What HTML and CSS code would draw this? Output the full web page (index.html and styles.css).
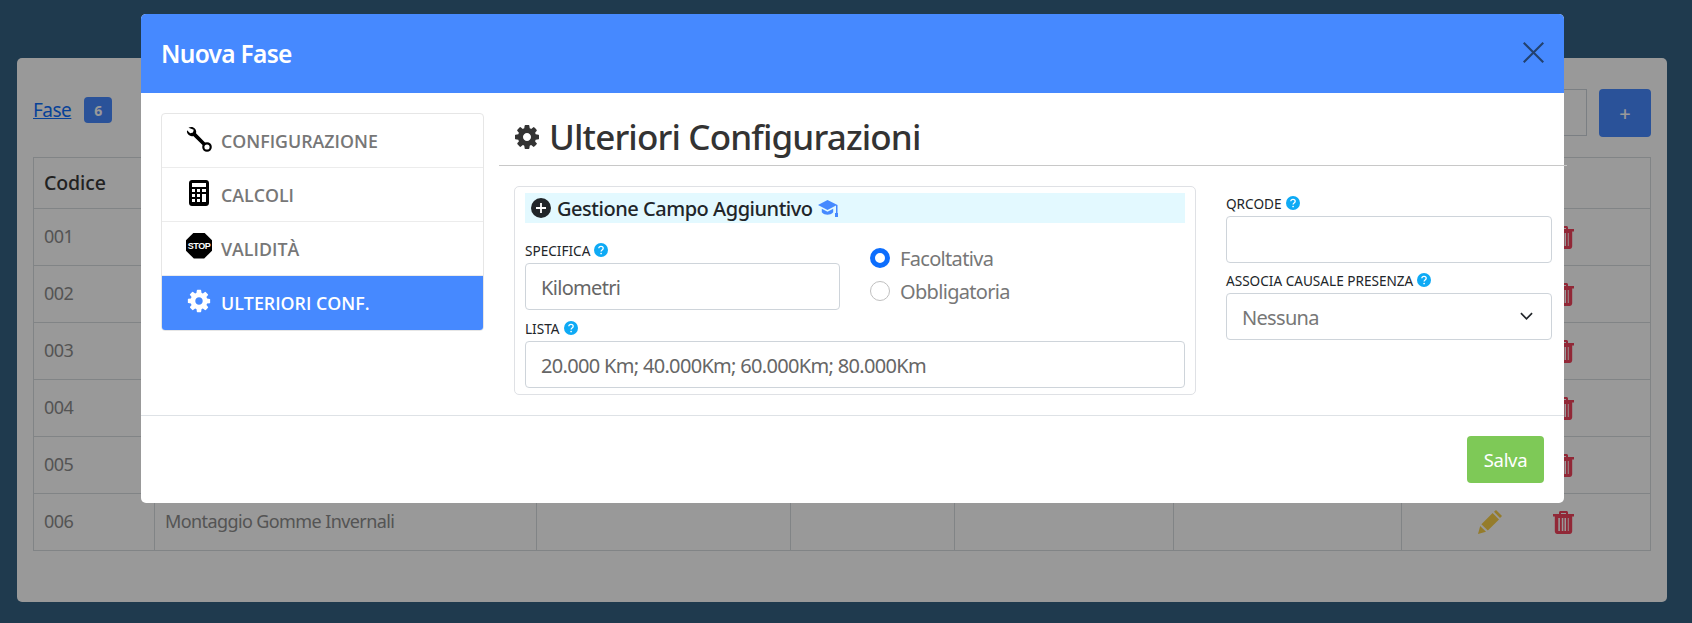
FILE: index.html
```html
<!DOCTYPE html>
<html lang="it">
<head>
<meta charset="utf-8">
<title>Nuova Fase</title>
<link rel="stylesheet" href="styles.css">
</head>
<body>
<svg class="defs" width="0" height="0" aria-hidden="true">
  <symbol id="cog" viewBox="0 0 1792 1792"><path d="M1152 896q0-106-75-181t-181-75-181 75-75 181 75 181 181 75 181-75 75-181zm512-109v222q0 12-8 23t-20 13l-185 28q-19 54-39 91 35 50 107 138 10 12 10 25t-9 23q-27 37-99 108t-94 71q-12 0-26-9l-138-108q-44 23-91 38-16 136-29 186-7 28-36 28h-222q-14 0-24.5-8.5t-11.5-21.5l-28-184q-49-16-90-37l-141 107q-10 9-25 9-14 0-25-11-126-114-165-168-7-10-7-23 0-12 8-23 15-21 51-66.5t54-70.5q-27-50-41-99l-183-27q-13-2-21-12.5t-8-23.5v-222q0-12 8-23t19-13l186-28q14-46 39-92-40-57-107-138-10-12-10-24 0-10 9-23 26-36 98.5-107.5t94.5-71.5q13 0 26 10l138 107q44-23 91-38 16-136 29-186 7-28 36-28h222q14 0 24.5 8.5t11.5 21.5l28 184q49 16 90 37l142-107q9-9 24-9 13 0 25 10 129 119 165 170 7 8 7 22 0 12-8 23-15 21-51 66.5t-54 70.5q26 50 41 98l183 28q13 2 21 12.5t8 23.5z"/></symbol>
  <symbol id="pencil" viewBox="0 0 24 24"><path d="M0 24l2.2-8 5.8 5.8z"/><path d="M3.4 14.2L14.6 3l6.4 6.4L9.8 20.6z"/><path d="M16 1.8L18 0l6 6-2 2z"/></symbol>
  <symbol id="trash" viewBox="0 0 21 23"><path fill-rule="evenodd" d="M0 3h6V1.500C6 .7 6.700 0 7.500 0h6c.8 0 1.500.7 1.500 1.500V3h6v2.600h-1.800v14.600c0 1.500-1.100 2.800-2.500 2.800H4.300c-1.400 0-2.500-1.300-2.500-2.800V5.600H0zM8 1.900v1.100h5V1.900zM5.300 7v13h1.600V7zM8.800 7v13h1.500V7zM11.500 7v13H13V7zM14.800 7v13h.9V7z"/></symbol>
  <symbol id="help" viewBox="0 0 14 14"><circle cx="7" cy="7" r="7" fill="#0eaaf5"/><path d="M4.800 5.300C4.900 4 5.800 3.300 7 3.300c1.300 0 2.200.8 2.200 1.900 0 1.800-2.100 1.700-2.100 3.300" fill="none" stroke="#fff" stroke-width="1.300"/><circle cx="7.100" cy="10.500" r=".85" fill="#fff"/></symbol>
</svg>

<main class="card">
  <div class="card-top">
    <div class="card-title">
      <a class="fase-link" href="#">Fase</a>
      <span class="count">6</span>
    </div>
    <div class="card-tools">
      <div class="search"></div>
      <button class="add" type="button">+</button>
    </div>
  </div>
  <table class="grid">
    <colgroup>
      <col class="c1"><col class="c2"><col class="c3"><col class="c4"><col class="c5"><col class="c6"><col class="c7">
    </colgroup>
    <thead>
      <tr><th>Codice</th><th></th><th></th><th></th><th></th><th></th><th></th></tr>
    </thead>
    <tbody>
      <tr><td>001</td><td></td><td></td><td></td><td></td><td></td>
        <td class="acts"><svg class="pen"><use href="#pencil"/></svg><svg class="bin"><use href="#trash"/></svg></td></tr>
      <tr><td>002</td><td></td><td></td><td></td><td></td><td></td>
        <td class="acts"><svg class="pen"><use href="#pencil"/></svg><svg class="bin"><use href="#trash"/></svg></td></tr>
      <tr><td>003</td><td></td><td></td><td></td><td></td><td></td>
        <td class="acts"><svg class="pen"><use href="#pencil"/></svg><svg class="bin"><use href="#trash"/></svg></td></tr>
      <tr><td>004</td><td></td><td></td><td></td><td></td><td></td>
        <td class="acts"><svg class="pen"><use href="#pencil"/></svg><svg class="bin"><use href="#trash"/></svg></td></tr>
      <tr><td>005</td><td></td><td></td><td></td><td></td><td></td>
        <td class="acts"><svg class="pen"><use href="#pencil"/></svg><svg class="bin"><use href="#trash"/></svg></td></tr>
      <tr><td>006</td><td>Montaggio Gomme Invernali</td><td></td><td></td><td></td><td></td>
        <td class="acts"><svg class="pen"><use href="#pencil"/></svg><svg class="bin"><use href="#trash"/></svg></td></tr>
    </tbody>
  </table>
</main>

<div class="backdrop"></div>

<section class="modal">
  <header class="modal-head">
    <h2>Nuova Fase</h2>
    <svg class="close" viewBox="0 0 20 20"><path d="M.7.7l18.600 18.600M19.300.7L.7 19.300"/></svg>
  </header>
  <div class="modal-body">
    <nav class="side">
      <a class="side-item" href="#">
        <svg class="side-ico" viewBox="0 0 26 26"><path d="M2.500 1.800C4.600 .4 7.400.8 9 2.700c1.100 1.300 1.500 3 1 4.500l9.500 9.800-2.500 2.500L7.300 10c-1.700.5-3.500.1-4.800-1.200C1.200 7.500.7 5.800 1 4.200l3.200 3 2.800-.7.700-2.800z"/><circle cx="21" cy="21" r="3.700" fill="none" stroke="#000" stroke-width="2.200"/></svg>
        <span>CONFIGURAZIONE</span>
      </a>
      <a class="side-item" href="#">
        <svg class="side-ico" viewBox="0 0 26 26"><path fill-rule="evenodd" d="M6 0h14c1.700 0 3 1.300 3 3v20c0 1.700-1.300 3-3 3H6c-1.700 0-3-1.300-3-3V3c0-1.700 1.300-3 3-3zM6 3v4h14V3zM6 9v3h3V9zM11 9v3h3V9zM16 9v3h4V9zM6 14v3h3v-3zM11 14v3h3v-3zM16 14v8h4v-8zM6 19v3h3v-3zM11 19v3h3v-3z"/></svg>
        <span>CALCOLI</span>
      </a>
      <a class="side-item" href="#">
        <span class="stop"><span>STOP</span></span>
        <span>VALIDITÀ</span>
      </a>
      <a class="side-item active" href="#">
        <svg class="side-ico cog-white"><use href="#cog"/></svg>
        <span>ULTERIORI CONF.</span>
      </a>
    </nav>
    <div class="content">
      <h1 class="page-title"><svg class="title-cog"><use href="#cog"/></svg>Ulteriori Configurazioni</h1>
      <div class="content-row">
        <div class="panel">
          <div class="strip">
            <svg class="plus" viewBox="0 0 20 20"><circle cx="10" cy="10" r="10" fill="#212529"/><path d="M10 5v10M5 10h10" stroke="#fff" stroke-width="1.800"/></svg>
            <span>Gestione Campo Aggiuntivo</span>
            <svg class="cap" viewBox="0 0 20 17"><path d="M9.500 0L0 5l9.500 5 8.500-4.400V13h1.500V5z"/><path d="M3.800 8.800v3.400c1.600 1.800 3.700 2.500 5.700 2.500s4.100-.7 5.700-2.500V8.800L9.500 11.800z"/><rect x="17" y="13" width="3" height="4"/></svg>
          </div>
          <div class="panel-row">
            <div class="field spec">
              <label class="lab">SPECIFICA <svg class="help"><use href="#help"/></svg></label>
              <div class="input">Kilometri</div>
            </div>
            <div class="radios">
              <div class="radio"><span class="dot on"></span>Facoltativa</div>
              <div class="radio"><span class="dot"></span>Obbligatoria</div>
            </div>
          </div>
          <div class="field">
            <label class="lab">LISTA <svg class="help"><use href="#help"/></svg></label>
            <div class="input">20.000 Km; 40.000Km; 60.000Km; 80.000Km</div>
          </div>
        </div>
        <div class="aside-fields">
          <div class="field">
            <label class="lab">QRCODE <svg class="help"><use href="#help"/></svg></label>
            <div class="input"></div>
          </div>
          <div class="field">
            <label class="lab">ASSOCIA CAUSALE PRESENZA <svg class="help"><use href="#help"/></svg></label>
            <div class="input select">Nessuna
              <svg class="chev" viewBox="0 0 14 8"><path d="M1 1l6 6 6-6"/></svg>
            </div>
          </div>
        </div>
      </div>
    </div>
  </div>
  <footer class="modal-foot">
    <button class="save" type="button">Salva</button>
  </footer>
</section>
</body>
</html>
```

FILE: styles.css
```css
* { box-sizing: border-box; }

html, body { margin: 0; height: 100%; }

body {
  height: 623px;
  overflow: hidden;
  background: #356182;
  font-family: "Noto Sans", "Open Sans", sans-serif;
  font-size: 16px;
  color: #212529;
}

.defs { display: block; height: 0; }

.card {
  margin: 58px 25px 0 17px;
  height: 544px;
  padding: 31px 16px 0;
  background: #fff;
  border-radius: 5px;
}

.card-top {
  display: flex;
  justify-content: space-between;
  align-items: flex-start;
  height: 68px;
}

.card-title {
  display: flex;
  align-items: center;
  gap: 13px;
  height: 42px;
}

.fase-link { color: #0d6efd; font-size: 19px; letter-spacing: -.5px; }

.count {
  width: 28px;
  height: 26px;
  display: flex;
  align-items: center;
  justify-content: center;
  border-radius: 4px;
  background: #4689ff;
  color: #fff;
  font-size: 14px;
  font-weight: 700;
}

.card-tools { display: flex; gap: 12px; }

.search {
  width: 300px;
  height: 47px;
  border: 1px solid #ced4da;
}

.add {
  width: 52px;
  height: 48px;
  border: 0;
  border-radius: 4px;
  background: #4689ff;
  color: #fff;
  font: 500 20px "Noto Sans", sans-serif;
}

.grid {
  width: 1617px;
  table-layout: fixed;
  border-collapse: collapse;
}

.c1 { width: 121px; }
.c2 { width: 382px; }
.c3 { width: 254px; }
.c4 { width: 164px; }
.c5 { width: 219px; }
.c6 { width: 228px; }
.c7 { width: 249px; }

.grid th, .grid td {
  border: 1px solid #d8dcdf;
  padding: 0 10px 2px;
  height: 57px;
  text-align: left;
  font-size: 18px;
  letter-spacing: -.6px;
  color: #8c8c8c;
  font-weight: 400;
}

.grid thead th {
  height: 51px;
  color: #393939;
  font-size: 19.500px;
  letter-spacing: -.1px;
  font-weight: 500;
}

.grid td.acts { padding: 0 0 2px 76px; }

.pen, .bin { display: inline-block; vertical-align: middle; }
.pen { width: 24px; height: 24px; fill: #f8cf48; }
.bin { width: 21px; height: 23px; margin-left: 51px; fill: #f2445c; }

.backdrop {
  position: fixed;
  inset: 0;
  background: rgba(0, 0, 0, .4);
}

.modal {
  position: absolute;
  top: 14px;
  left: 141px;
  width: 1423px;
  height: 489px;
  display: flex;
  flex-direction: column;
  background: #fff;
  border-radius: 5px;
}

.modal-head {
  flex: none;
  height: 79px;
  padding: 0 20px;
  display: flex;
  align-items: center;
  justify-content: space-between;
  background: #4689ff;
  border-radius: 5px 5px 0 0;
}

.modal-head h2 {
  margin: 0;
  color: #fff;
  font-size: 24.500px;
  letter-spacing: -.7px;
  font-weight: 600;
}

.close {
  width: 21px;
  height: 21px;
  margin-bottom: 2px;
  fill: none;
  stroke: #23416f;
  stroke-width: 2;
}

.modal-body {
  flex: 1;
  display: flex;
  padding: 20px 0 0 20px;
  border-bottom: 1px solid #dee2e6;
  min-height: 0;
}

.side {
  flex: none;
  width: 323px;
  height: 218px;
  border: 1px solid #e6e6e6;
  border-radius: 4px;
  overflow: hidden;
}

.side-item {
  display: flex;
  align-items: center;
  gap: 9px;
  height: 54px;
  padding: 0 0 0 24px;
  border-bottom: 1px solid #ececec;
  color: #777;
  font-family: "Open Sans", "Noto Sans", sans-serif;
  font-size: 17.800px;
  font-weight: 600;
  text-decoration: none;
}

.side-item:last-child { border-bottom: 0; }

.side-item.active { background: #4689ff; color: #fff; }

.side-ico { flex: none; width: 26px; height: 26px; margin-top: -4px; }
.cog-white { fill: #fff; }

.stop {
  flex: none;
  width: 26px;
  height: 26px;
  margin-top: -6px;
  display: flex;
  align-items: center;
  justify-content: center;
  background: #000;
  clip-path: polygon(30% 0, 70% 0, 100% 30%, 100% 70%, 70% 100%, 30% 100%, 0 70%, 0 30%);
}

.stop span {
  color: #fff;
  font-family: "Liberation Sans", sans-serif;
  font-size: 9px;
  font-weight: 700;
  letter-spacing: -.4px;
}

.content {
  flex: 1;
  margin-left: 15px;
  min-width: 0;
  width: 1068px;
  margin-right: -3px;
}

.page-title {
  display: flex;
  align-items: center;
  height: 53px;
  margin: 0;
  padding: 0 0 5px 14px;
  border-bottom: 1px solid #c8c8c8;
  font-size: 35px;
  letter-spacing: -.85px;
  font-weight: 500;
  color: #333;
}

.title-cog { width: 28px; height: 28px; margin-right: 8px; fill: #333; }

.content-row {
  display: flex;
  margin-top: 20px;
  padding-left: 15px;
}

.panel {
  flex: none;
  width: 682px;
  height: 209px;
  padding: 6px 10px 0;
  border: 1px solid #dfe1e5;
  border-radius: 5px;
}

.strip {
  display: flex;
  align-items: center;
  height: 30px;
  padding-left: 6px;
  background: #e3f9ff;
  font-size: 20px;
  letter-spacing: -.47px;
  font-weight: 500;
}

.plus { width: 20px; height: 20px; margin-right: 6px; }
.cap { width: 20px; height: 17px; margin-left: 5px; fill: #4689ff; }

.panel-row {
  display: flex;
  margin-top: 17px;
}

.field.spec { flex: none; width: 315px; }

.lab {
  display: flex;
  align-items: center;
  gap: 4px;
  height: 23px;
  padding-bottom: 2px;
  font-size: 13.600px;
  color: #212529;
}

.help { width: 14px; height: 14px; margin-top: -2px; }

.input {
  position: relative;
  height: 47px;
  padding: 2px 15px 0;
  display: flex;
  align-items: center;
  border: 1px solid #ced4da;
  border-radius: 4px;
  color: #666;
  font-size: 20px;
  letter-spacing: -.68px;
}

.radios {
  margin: 8px 0 0 30px;
  display: flex;
  flex-direction: column;
  gap: 13px;
}

.radio {
  display: flex;
  align-items: center;
  gap: 10px;
  height: 20px;
  color: #777;
  font-size: 20px;
  letter-spacing: -.68px;
}

.dot {
  flex: none;
  width: 20px;
  height: 20px;
  border: 1px solid #bfbfbf;
  border-radius: 50%;
}

.dot.on { border: 5px solid #0d6efd; background: #fff; }

.panel > .field { margin-top: 8px; }

.aside-fields {
  flex: none;
  width: 326px;
  margin-left: 30px;
  padding-top: 7px;
  display: flex;
  flex-direction: column;
  gap: 7px;
}

.select { color: #777; justify-content: flex-start; }

.chev {
  position: absolute;
  right: 18px;
  top: 18px;
  width: 13px;
  height: 8px;
  fill: none;
  stroke: #212529;
  stroke-width: 1.800;
}

.modal-foot {
  flex: none;
  height: 87px;
  padding: 20px 20px 0 0;
  display: flex;
  justify-content: flex-end;
  align-items: flex-start;
}

.save {
  width: 77px;
  height: 47px;
  border: 0;
  border-radius: 4px;
  background: #7ec957;
  color: #fff;
  font: 400 18.500px "Noto Sans", sans-serif;
  letter-spacing: -.3px;
}
```
